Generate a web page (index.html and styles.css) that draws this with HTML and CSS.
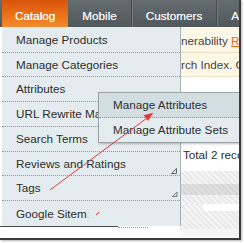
FILE: index.html
```
<!DOCTYPE html>
<html lang="en">
<head>
    <meta charset="UTF-8">
    <title>Catalog menu</title>
    <link rel="stylesheet" href="styles.css">
</head>
<body>
    <div class="shot">
        <div class="nav">
            <div class="tab active">Catalog</div>
            <div class="tab">Mobile</div>
            <div class="tab">Customers</div>
            <div class="tab">Advanced</div>
        </div>

        <div class="page">
            <div class="notice first">nerability <a href="#">Read details</a></div>
            <div class="notice">rch Index. Click here</div>
            <div class="count">Total 2 records found</div>
            <div class="grid">
                <div class="grid-row light h13"></div>
                <div class="grid-row dark h11"></div>
                <div class="grid-row light h9"></div>
                <div class="grid-row gap h7"><span class="bar"></span></div>
                <div class="grid-row light h18"></div>
                <div class="grid-row fade h8"></div>
            </div>
        </div>

        <ul class="menu">
            <li>Manage Products</li>
            <li>Manage Categories</li>
            <li>Attributes</li>
            <li><span class="under">URL Rewrite Management</span></li>
            <li>Search Terms</li>
            <li>Reviews and Ratings</li>
            <li>Tags</li>
            <li>Google Sitem<span class="faded">:</span></li>
        </ul>

        <ul class="submenu">
            <li class="hover">Manage Attributes</li>
            <li>Manage Attribute Sets</li>
        </ul>

        <svg class="marks" width="241" height="240" viewBox="0 0 241 240">
            <line x1="50" y1="190" x2="147" y2="118" stroke="#e8343a" stroke-width="1"/>
            <polygon points="153.3,112.7 147.9,120.9 143.7,115.3" fill="#e8343a"/>
            <line x1="96" y1="215" x2="99" y2="212" stroke="#e8343a" stroke-width="1"/>
            <polygon points="171.5,173.5 176.5,168.5 176.5,173.5" fill="none" stroke="#666" stroke-width="1"/>
            <polygon points="172.5,196.5 177,192 177,196.5" fill="none" stroke="#777" stroke-width="1"/>
        </svg>
    </div>
</body>
</html>
```

FILE: styles.css
```
body {
    margin: 0;
    width: 244px;
    height: 243px;
    overflow: hidden;
    background: #fff;
    font-family: "Liberation Sans", Arial, sans-serif;
    font-size: 11.7px;
}
.shot {
    position: relative;
    width: 241px;
    height: 240px;
    box-sizing: border-box;
    border-right: 2px solid #3c3c3c;
    border-bottom: 2px solid #3c3c3c;
    box-shadow: 1px 1px 2px rgba(0, 0, 0, 0.3);
    overflow: hidden;
    background: #fff;
}
.nav {
    display: flex;
    height: 27px;
    padding-left: 2px;
    background: linear-gradient(#646c6f, #50585b);
    white-space: nowrap;
}
.tab {
    padding: 4px 14px 0;
    line-height: 23px;
    color: #eef0f0;
    border-right: 1px solid #444b4e;
    box-shadow: 1px 0 #737b7e;
    text-shadow: 0 0 0.4px #eef0f0;
}
.tab.active {
    padding: 4px 13px 0;
    color: #fff;
    border-right: none;
    box-shadow: none;
    background: linear-gradient(#d9530b, #ee7a1c 70%, #f28d33);
}
.page {
    margin-left: 180px;
    color: #444;
    white-space: nowrap;
}
.notice {
    background: #fdf7e6;
    border-bottom: 1px solid #e9dfc4;
    padding: 1px 0 0 1px;
    line-height: 22px;
}
.notice.first {
    padding-top: 3px;
}
.notice a {
    color: #eb6a12;
}
.count {
    margin-top: 68px;
    padding-left: 3px;
    line-height: 20px;
    color: #2e2e2e;
}
.grid {
    margin-top: 6px;
}
.grid-row.light {
    background: repeating-linear-gradient(45deg, #e9e9e9 0 2px, #f5f5f5 2px 4px);
}
.grid-row.dark {
    background: repeating-linear-gradient(45deg, #d6d6d6 0 2px, #e1e1e1 2px 4px);
}
.grid-row.gap {
    display: flex;
    background: repeating-linear-gradient(45deg, #ececec 0 2px, #f6f6f6 2px 4px);
}
.grid-row.fade {
    background: #f6f6f6;
}
.bar {
    margin-left: 23px;
    flex: 1;
    background: #fff;
}
.h7 { height: 7px; }
.h8 { height: 8px; }
.h9 { height: 9px; }
.h11 { height: 11px; }
.h13 { height: 13px; }
.h18 { height: 18px; }
.menu {
    position: absolute;
    left: 2px;
    top: 27px;
    width: 178px;
    margin: 0;
    padding: 1px 0 0;
    list-style: none;
    background: #e4ecef;
    border-right: 1px solid #a7b0b3;
    color: #2e2e2e;
    white-space: nowrap;
    overflow: hidden;
}
.menu li {
    padding-left: 14px;
    line-height: 23.7px;
    border-bottom: 1px dotted #8d969a;
}
.menu li:last-child {
    line-height: 25px;
    border-bottom: none;
}
.under {
    display: inline-block;
    max-width: 82px;
    overflow: hidden;
    vertical-align: top;
}
.faded {
    color: #c3c8ca;
}
.shot::after {
    content: "";
    position: absolute;
    left: 0;
    top: 226px;
    width: 118px;
    height: 1px;
    background: #4a4a4a;
}
.shot::before {
    content: "";
    position: absolute;
    left: 118px;
    top: 227px;
    width: 30px;
    border-top: 1px dotted #9a9a9a;
}
.submenu {
    position: absolute;
    left: 98px;
    top: 92px;
    width: 150px;
    margin: 0;
    padding: 0;
    list-style: none;
    background: #e4ecef;
    border: 1px solid #9ba5a9;
    box-shadow: 1px 1px 2px rgba(0, 0, 0, 0.25);
    color: #2e2e2e;
    white-space: nowrap;
}
.submenu li {
    padding-left: 14px;
    line-height: 24px;
}
.submenu li.hover {
    background: #d3dee2;
    border-bottom: 1px dotted #8d969a;
}
.marks {
    position: absolute;
    left: 0;
    top: 0;
    pointer-events: none;
}
```
